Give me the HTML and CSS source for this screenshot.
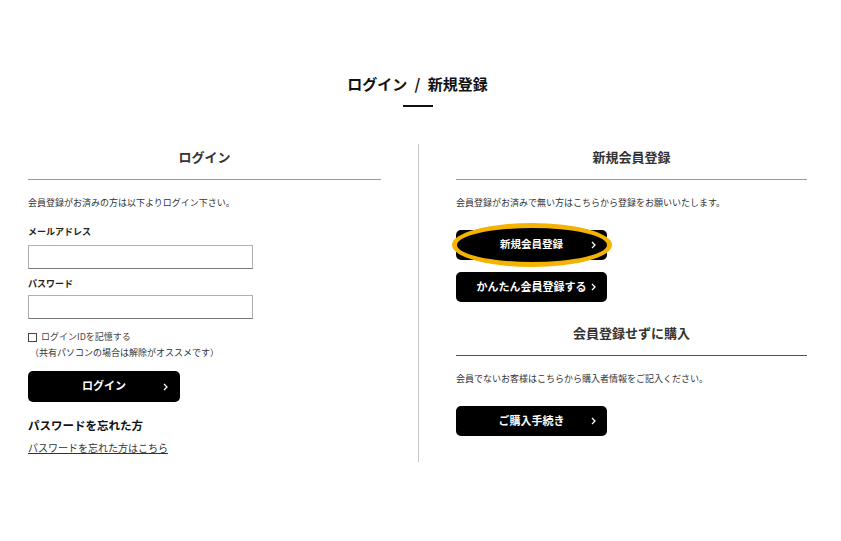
FILE: index.html
```html
<!DOCTYPE html>
<html lang="ja">
<head>
<meta charset="utf-8">
<title>ログイン / 新規登録</title>
<link rel="stylesheet" href="styles.css">
</head>
<body>
<div class="page">
  <h1 class="page-title">ログイン / 新規登録</h1>
  <div class="title-bar"></div>
  <div class="columns">
    <section class="col col-left">
      <h2 class="col-head">ログイン</h2>
      <p class="small lead">会員登録がお済みの方は以下よりログイン下さい。</p>
      <div class="label label-first">メールアドレス</div>
      <input class="field field-first" type="text">
      <div class="label label-second">パスワード</div>
      <input class="field field-second" type="password">
      <label class="small remember"><span class="box"></span>ログインIDを記憶する</label>
      <p class="small note">（共有パソコンの場合は解除がオススメです）</p>
      <a class="btn btn-login" href="#"><span class="btn-text">ログイン</span><svg class="chev" width="5" height="8" viewBox="0 0 5 8"><path d="M1 1l3 3-3 3" fill="none" stroke="#fff" stroke-width="1.3"/></svg></a>
      <h3 class="forgot-head">パスワードを忘れた方</h3>
      <a class="forgot-link" href="#">パスワードを忘れた方はこちら</a>
    </section>
    <div class="divider"></div>
    <section class="col col-right">
      <h2 class="col-head">新規会員登録</h2>
      <p class="small lead">会員登録がお済みで無い方はこちらから登録をお願いいたします。</p>
      <a class="btn btn-r btn-new" href="#"><span class="ring"></span><span class="btn-text">新規会員登録</span><svg class="chev" width="5" height="8" viewBox="0 0 5 8"><path d="M1 1l3 3-3 3" fill="none" stroke="#fff" stroke-width="1.3"/></svg></a>
      <a class="btn btn-r btn-easy" href="#"><span class="btn-text">かんたん会員登録する</span><svg class="chev" width="5" height="8" viewBox="0 0 5 8"><path d="M1 1l3 3-3 3" fill="none" stroke="#fff" stroke-width="1.3"/></svg></a>
      <h2 class="col-head head-guest">会員登録せずに購入</h2>
      <p class="small lead">会員でないお客様はこちらから購入者情報をご記入ください。</p>
      <a class="btn btn-r btn-guest" href="#"><span class="btn-text">ご購入手続き</span><svg class="chev" width="5" height="8" viewBox="0 0 5 8"><path d="M1 1l3 3-3 3" fill="none" stroke="#fff" stroke-width="1.3"/></svg></a>
    </section>
  </div>
</div>
</body>
</html>
```
FILE: styles.css
```css
* { box-sizing: border-box; }
html, body { margin: 0; padding: 0; background: #fff; }
body {
  font-family: "Noto Sans CJK JP", "Noto Sans", sans-serif;
  color: #333;
}
.page { padding: 74px 34px 0 28px; }
.page-title {
  margin: 0;
  font-size: 15px;
  line-height: 20px;
  font-weight: 700;
  color: #111;
  text-align: center;
  word-spacing: 4px;
}
.title-bar {
  width: 30px;
  height: 2px;
  background: #111;
  margin: 11px 0 0 375px;
}
.columns {
  display: flex;
  margin-top: 37px;
}
.col { display: flex; flex-direction: column; align-items: flex-start; }
.col-left { width: 353px; padding-bottom: 6px; }
.col-right { width: 351px; }
.divider { width: 1px; background: #c8c8c8; margin: 0 37px; }
.col-head {
  align-self: stretch;
  margin: 0;
  font-size: 13px;
  line-height: 26px;
  font-weight: 700;
  color: #333;
  text-align: center;
  padding-bottom: 9px;
  border-bottom: 1px solid #9a9a9a;
}
.head-guest { margin-top: 18px; border-bottom-color: #555; }
.small { font-size: 9px; line-height: 16px; margin: 0; color: #333; }
.lead { margin-top: 15px; }
.label {
  font-size: 9px;
  line-height: 16px;
  font-weight: 700;
  color: #222;
}
.label-first { margin-top: 13px; }
.label-second { margin-top: 7px; }
.field {
  display: block;
  width: 225px;
  height: 24px;
  margin: 0;
  padding: 0;
  border: 1px solid #b0b0b0;
  border-bottom-color: #777;
  background: #fff;
}
.field-first { margin-top: 5px; }
.field-second { margin-top: 3px; }
.remember { margin-top: 10px; display: flex; align-items: center; color: #444; }
.box {
  width: 9px;
  height: 9px;
  border: 1px solid #444;
  margin-right: 4px;
  background: #fff;
}
.note { padding-left: 2px; }
.btn {
  display: grid;
  grid-template-columns: 1fr auto 1fr;
  align-items: center;
  background: #000;
  color: #fff;
  text-decoration: none;
  border-radius: 5px;
  font-size: 11px;
  font-weight: 700;
  position: relative;
}
.btn-text { grid-column: 2; position: relative; z-index: 1; line-height: 1; padding-bottom: 2px; }
.chev { grid-column: 3; justify-self: end; position: relative; z-index: 1; }
.btn-login { width: 152px; height: 31px; margin-top: 10px; }
.btn-login .chev { margin-right: 12px; }
.btn-r { width: 151px; height: 30px; }
.btn-r .chev { margin-right: 11px; }
.btn-new { margin-top: 19px; font-size: 10.5px; }
.btn-easy { margin-top: 12px; }
.btn-guest { margin-top: 19px; }
.ring {
  position: absolute;
  left: -4px;
  right: -5px;
  top: -7px;
  bottom: -7px;
  border: 5px solid #f4b300;
  border-radius: 50%;
  background: #000;
}
.forgot-head {
  margin: 14px 0 0;
  font-size: 11.5px;
  line-height: 18px;
  font-weight: 700;
  color: #111;
}
.forgot-link {
  margin-top: 6px;
  font-size: 10px;
  line-height: 16px;
  color: #333;
  text-decoration: underline;
}
```
